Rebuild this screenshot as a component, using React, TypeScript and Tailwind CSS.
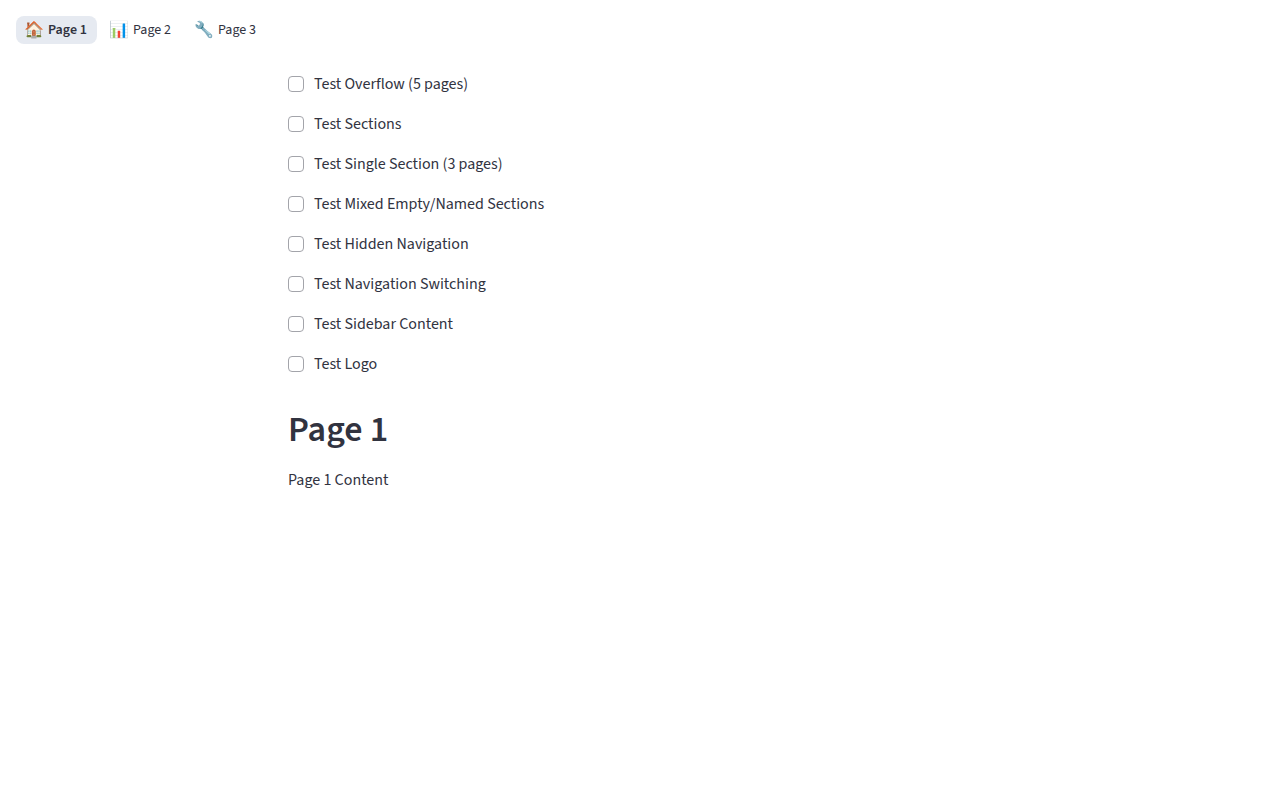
const tests = [
  "Test Overflow (5 pages)",
  "Test Sections",
  "Test Single Section (3 pages)",
  "Test Mixed Empty/Named Sections",
  "Test Hidden Navigation",
  "Test Navigation Switching",
  "Test Sidebar Content",
  "Test Logo",
];

const pages = [
  { icon: "🏠", name: "Page 1" },
  { icon: "📊", name: "Page 2" },
  { icon: "🔧", name: "Page 3" },
];

export default function App() {
  return (
    <div className="min-h-screen bg-white text-[#31333f] font-['Source_Sans_Pro','Source_Sans_3','Noto_Sans_CJK_SC',sans-serif]">
      <header className="px-4 pt-4">
        <nav className="flex gap-1">
          {pages.map((page, i) => (
            <a
              key={page.name}
              href="#"
              aria-current={i === 0 ? "page" : undefined}
              className={
                i === 0
                  ? "flex h-7 min-w-[81px] items-center gap-1 rounded-lg bg-[#e6eaf1] px-2 text-sm font-semibold"
                  : "flex h-7 min-w-[81px] items-center gap-1 rounded-lg px-2 text-sm"
              }
            >
              <span className="text-base">{page.icon}</span>
              <span>{page.name}</span>
            </a>
          ))}
        </nav>
      </header>
      <main className="mx-auto flex max-w-[704px] flex-col gap-4 pt-7">
        {tests.map((test) => (
          <label key={test} className="flex h-6 items-center gap-[10px] text-base">
            <input
              type="checkbox"
              className="size-4 appearance-none rounded border border-[#a3a4aa] checked:border-[#ff4b4b] checked:bg-[#ff4b4b]"
            />
            <span>{test}</span>
          </label>
        ))}
        <h1 className="pt-[18px] pb-[2px] text-4xl font-semibold">Page 1</h1>
        <p>Page 1 Content</p>
      </main>
    </div>
  );
}
